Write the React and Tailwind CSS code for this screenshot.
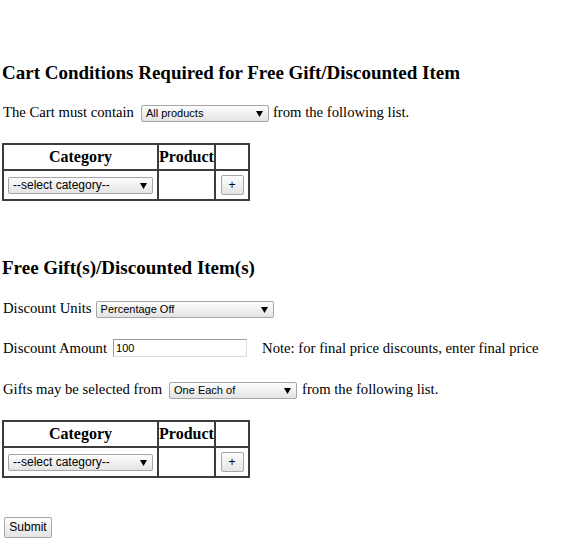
import React from "react";

function Arrow() {
  return (
    <svg width="7" height="7" viewBox="0 0 7 7" className="shrink-0">
      <path d="M0 1 L7 1 L3.5 7 Z" fill="#000" />
    </svg>
  );
}

function Select({ label, w, text = "text-[11px]" }) {
  return (
    <div
      className={`inline-flex h-[17px] items-center justify-between rounded-[2px] border border-[#a6a6a6] bg-gradient-to-b from-[#fdfdfd] to-[#e4e4e4] pl-[4px] pr-[5px] font-['Liberation_Sans'] ${text} leading-none text-black align-middle`}
      style={{ width: w }}
    >
      <span>{label}</span>
      <Arrow />
    </div>
  );
}

function Btn({ children, cls }) {
  return (
    <div
      className={`inline-flex items-center justify-center rounded-[2px] border border-[#a6a6a6] bg-gradient-to-b from-[#fdfdfd] to-[#e4e4e4] font-['Liberation_Sans'] text-[12px] text-black ${cls}`}
    >
      {children}
    </div>
  );
}

function CatTable() {
  return (
    <table className="border-collapse border-2 border-[#3c3c3c] text-[16px]">
      <tbody>
        <tr className="h-[26px]">
          <th className="w-[155px] border-2 border-[#3c3c3c] p-0 text-center font-bold">Category</th>
          <th className="w-[57px] border-2 border-[#3c3c3c] p-0 text-center font-bold">Product</th>
          <th className="w-[34px] border-2 border-[#3c3c3c] p-0"></th>
        </tr>
        <tr className="h-[30px]">
          <td className="border-2 border-[#3c3c3c] p-0">
            <div className="flex justify-center">
              <Select label="--select category--" w={145} text="text-[12px]" />
            </div>
          </td>
          <td className="border-2 border-[#3c3c3c] p-0"></td>
          <td className="border-2 border-[#3c3c3c] p-0">
            <div className="flex justify-center">
              <Btn cls="h-[20px] w-[23px]">+</Btn>
            </div>
          </td>
        </tr>
      </tbody>
    </table>
  );
}

export default function App() {
  return (
    <div className="min-h-[549px] whitespace-nowrap bg-white pl-[2px] pt-[62px] font-['Liberation_Serif'] text-[14.7px] text-black">
      <h3 className="h-[22px] text-[19px] font-bold leading-[22px]">
        Cart Conditions Required for Free Gift/Discounted Item
      </h3>
      <div className="mt-[17px] flex h-[22px] items-center">
        <span className="ml-[1px]">The Cart must contain</span>
        <span className="ml-[7px]">
          <Select label="All products" w={128} />
        </span>
        <span className="ml-[4px]">from the following list.</span>
      </div>
      <div className="mt-[20px]">
        <CatTable />
      </div>
      <h3 className="mt-[56px] h-[22px] text-[19px] font-bold leading-[22px]">
        Free Gift(s)/Discounted Item(s)
      </h3>
      <div className="mt-[18px] flex h-[22px] items-center">
        <span className="ml-[1px]">Discount Units</span>
        <span className="ml-[4px]">
          <Select label="Percentage Off" w={178} />
        </span>
      </div>
      <div className="mt-[18px] flex h-[22px] items-center">
        <span className="ml-[1px]">Discount Amount</span>
        <div className="ml-[6px] flex h-[18px] w-[134px] items-center border border-t-[#999] border-l-[#999] border-r-[#ddd] border-b-[#ddd] pl-[2px] font-['Liberation_Sans'] text-[11px]">
          100
        </div>
        <span className="ml-[15px]">Note: for final price discounts, enter final price</span>
      </div>
      <div className="mt-[19px] flex h-[22px] items-center">
        <span className="ml-[1px]">Gifts may be selected from</span>
        <span className="ml-[7px]">
          <Select label="One Each of" w={128} />
        </span>
        <span className="ml-[5px]">from the following list.</span>
      </div>
      <div className="mt-[20px]">
        <CatTable />
      </div>
      <div className="ml-[2px] mt-[37px]">
        <Btn cls="h-[21px] w-[48px]">Submit</Btn>
      </div>
    </div>
  );
}
